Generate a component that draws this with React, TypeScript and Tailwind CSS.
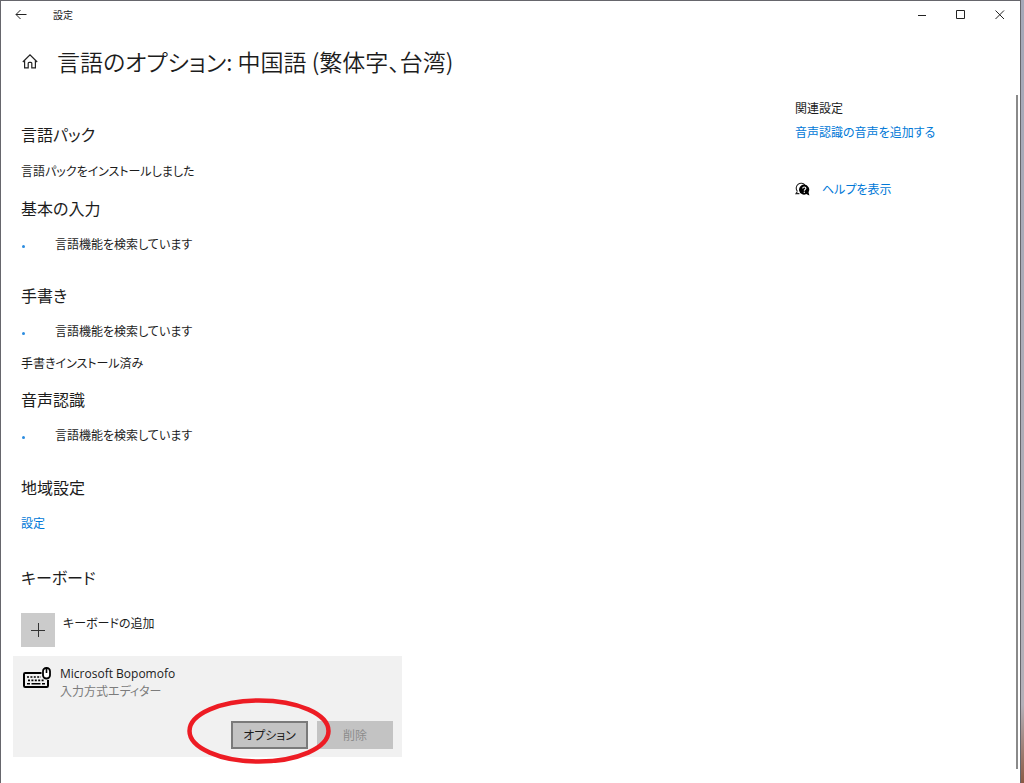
import type { ReactNode } from 'react';

interface ChildrenProps {
  children: ReactNode;
}

function BackIcon() {
  return (
    <svg width="12" height="12" viewBox="0 0 12 12" fill="none" stroke="#222" aria-hidden="true">
      <path d="M11.5 5.5H1M5.5 1 1 5.5 5.5 10" />
    </svg>
  );
}

function HomeIcon() {
  return (
    <svg width="16" height="16" viewBox="0 0 16 16" fill="none" stroke="#222" strokeWidth="1.2" aria-hidden="true">
      <path d="M.8 9 8 1.8 15.2 9M2.6 7.4v7.5h3.6v-4.6q0-.9.9-.9h1.8q.9 0 .9.9v4.6h3.6V7.4" />
    </svg>
  );
}

function HelpIcon() {
  return (
    <svg width="15" height="15" viewBox="0 0 15 15" aria-hidden="true">
      <path
        d="M2.4 9.4A4.9 4.9 0 1 1 10 3M2.4 9.4 1 11.6h3.4"
        fill="none"
        stroke="#222"
        strokeWidth="1.1"
      />
      <path d="M9.2 2.6a5 5 0 0 1 4.3 7.6l.9 3.4-3.2-1.5A5 5 0 1 1 9.2 2.6Z" fill="#000" />
      <path d="M7.7 6.4c0-2 3.2-1.9 3.2-.1 0 1.2-1.6 1.2-1.6 2.4" fill="none" stroke="#fff" strokeWidth="1.1" />
      <circle cx="9.3" cy="10.3" r=".7" fill="#fff" />
    </svg>
  );
}

function KeyboardIcon() {
  return (
    <svg width="28" height="22" viewBox="0 0 28 22" fill="none" stroke="#000" aria-hidden="true">
      <path d="M18.5 6H2.2Q1 6 1 7.2v11.6Q1 20 2.2 20h21.6q1.2 0 1.2-1.2V13" strokeWidth="2" />
      <path d="M4 10h14M5 13.4h17" strokeWidth="1.6" strokeDasharray="2 1.4" />
      <path d="M4 16.8h3M8.5 16.8h9M19 16.8h3" strokeWidth="1.6" />
      <rect x="20" y="1" width="7" height="10.5" rx="3.3" fill="#fff" strokeWidth="1.8" />
      <path d="M23.5 1v5" strokeWidth="1.6" />
    </svg>
  );
}

function WindowControls() {
  const buttonClass = 'flex h-7 w-[39px] items-center justify-center';

  return (
    <div className="flex pr-px">
      <button type="button" aria-label="最小化" className={buttonClass}>
        <svg width="10" height="10" viewBox="0 0 10 10" stroke="#222" aria-hidden="true">
          <path d="M1 5.5h8" />
        </svg>
      </button>
      <button type="button" aria-label="最大化" className={buttonClass}>
        <svg width="10" height="10" viewBox="0 0 10 10" fill="none" stroke="#222" aria-hidden="true">
          <path d="M.5.5h8v8h-8z" />
        </svg>
      </button>
      <button type="button" aria-label="閉じる" className={buttonClass}>
        <svg width="10" height="10" viewBox="0 0 10 10" stroke="#222" aria-hidden="true">
          <path d="m.5.5 8.5 8.5M9 .5.5 9" />
        </svg>
      </button>
    </div>
  );
}

function SectionTitle({ children }: Readonly<ChildrenProps>) {
  return <h2 className="text-base leading-6">{children}</h2>;
}

function Searching() {
  return (
    <p className="mt-[14px] flex items-center gap-[30px] pl-px">
      <span className="mt-1 size-[3px] rounded-full bg-[#2b8ce0]" />
      言語機能を検索しています
    </p>
  );
}

function KeyboardCard() {
  return (
    <div className="mt-[9px] flex max-w-[389px] flex-col bg-[#f1f1f1] pt-[9px] pr-[9px] pb-2 pl-[10px]">
      <div className="flex items-start gap-[9px]">
        <span className="pt-[2px]">
          <KeyboardIcon />
        </span>
        <div className="leading-[17px]">
          <p className="font-['Open_Sans','Noto_Sans',sans-serif]">Microsoft Bopomofo</p>
          <p className="text-[#7c7c7c]">入力方式エディター</p>
        </div>
      </div>
      <div className="mt-[22px] flex justify-end gap-[9px]">
        <div className="relative">
          <button type="button" className="h-7 w-[77px] border-2 border-[#7a7a7a] bg-[#c3c3c3]">
            オプション
          </button>
          <svg
            className="pointer-events-none absolute -top-[23px] -left-11 z-10 max-w-none"
            width="144"
            height="66"
            viewBox="0 0 144 66"
            fill="none"
            aria-hidden="true"
          >
            <ellipse cx="72" cy="33" rx="69.5" ry="30.5" stroke="#ed1c24" strokeWidth="4.5" />
          </svg>
        </div>
        <button type="button" disabled className="h-7 w-[76px] bg-[#c3c3c3] text-[#8c8c8c]">
          削除
        </button>
      </div>
    </div>
  );
}

export default function App() {
  return (
    <div className="flex min-h-screen bg-white font-['Noto_Sans_CJK_JP',sans-serif] text-xs leading-5 text-[#1c1c1c] [font-feature-settings:'palt']">
      <div className="flex flex-1 flex-col border-t border-r border-l border-[#66666c]">
        <header className="flex items-center justify-between">
          <div className="flex items-center gap-[26px] pl-[14px]">
            <button type="button" aria-label="戻る">
              <BackIcon />
            </button>
            <span className="text-[10px]">設定</span>
          </div>
          <WindowControls />
        </header>

        <div className="mt-4 flex items-center gap-[19px] pl-[21px]">
          <button type="button" aria-label="ホーム">
            <HomeIcon />
          </button>
          <h1 className="text-[23px] leading-8 font-[350]">言語のオプション: 中国語 (繁体字、台湾)</h1>
        </div>

        <div className="mt-[18px] flex flex-1">
          <main className="flex-1 pt-[27px] pb-6 pl-3">
            <div className="pl-2">
              <SectionTitle>言語パック</SectionTitle>
              <p className="mt-[15px]">言語パックをインストールしました</p>

              <div className="mt-[15px]">
                <SectionTitle>基本の入力</SectionTitle>
                <Searching />
              </div>

              <div className="mt-[29px]">
                <SectionTitle>手書き</SectionTitle>
                <Searching />
                <p className="mt-3">手書きインストール済み</p>
              </div>

              <div className="mt-[14px]">
                <SectionTitle>音声認識</SectionTitle>
                <Searching />
              </div>

              <div className="mt-[30px]">
                <SectionTitle>地域設定</SectionTitle>
                <p className="mt-[14px]">
                  <a href="#region" className="text-[#0078d7]">
                    設定
                  </a>
                </p>
              </div>

              <div className="mt-8">
                <SectionTitle>キーボード</SectionTitle>
                <button type="button" className="mt-6 flex items-start gap-2">
                  <span className="flex size-[34px] items-center justify-center bg-[#cbcbcb]">
                    <svg width="14" height="14" viewBox="0 0 14 14" stroke="#333" aria-hidden="true">
                      <path d="M7.5 0v14M0 7.5h14" />
                    </svg>
                  </span>
                  キーボードの追加
                </button>
              </div>
            </div>

            <KeyboardCard />
          </main>

          <aside className="w-[221px] pt-[3px]">
            <h2>関連設定</h2>
            <a href="#speech" className="mt-1 block text-[#0078d7]">
              音声認識の音声を追加する
            </a>
            <a href="#help" className="mt-[37px] flex items-center gap-3 text-[#0078d7]">
              <HelpIcon />
              ヘルプを表示
            </a>
          </aside>

          <div className="mr-[2px] mb-[14px] w-[2px] bg-[#8a8a8a]" />
        </div>
      </div>
      {/* desktop showing past the window edge */}
      <div className="w-[3px] bg-linear-to-b from-[#a5a8b8] via-[#b4b0b8] via-90% to-[#8b5a44]" />
    </div>
  );
}
